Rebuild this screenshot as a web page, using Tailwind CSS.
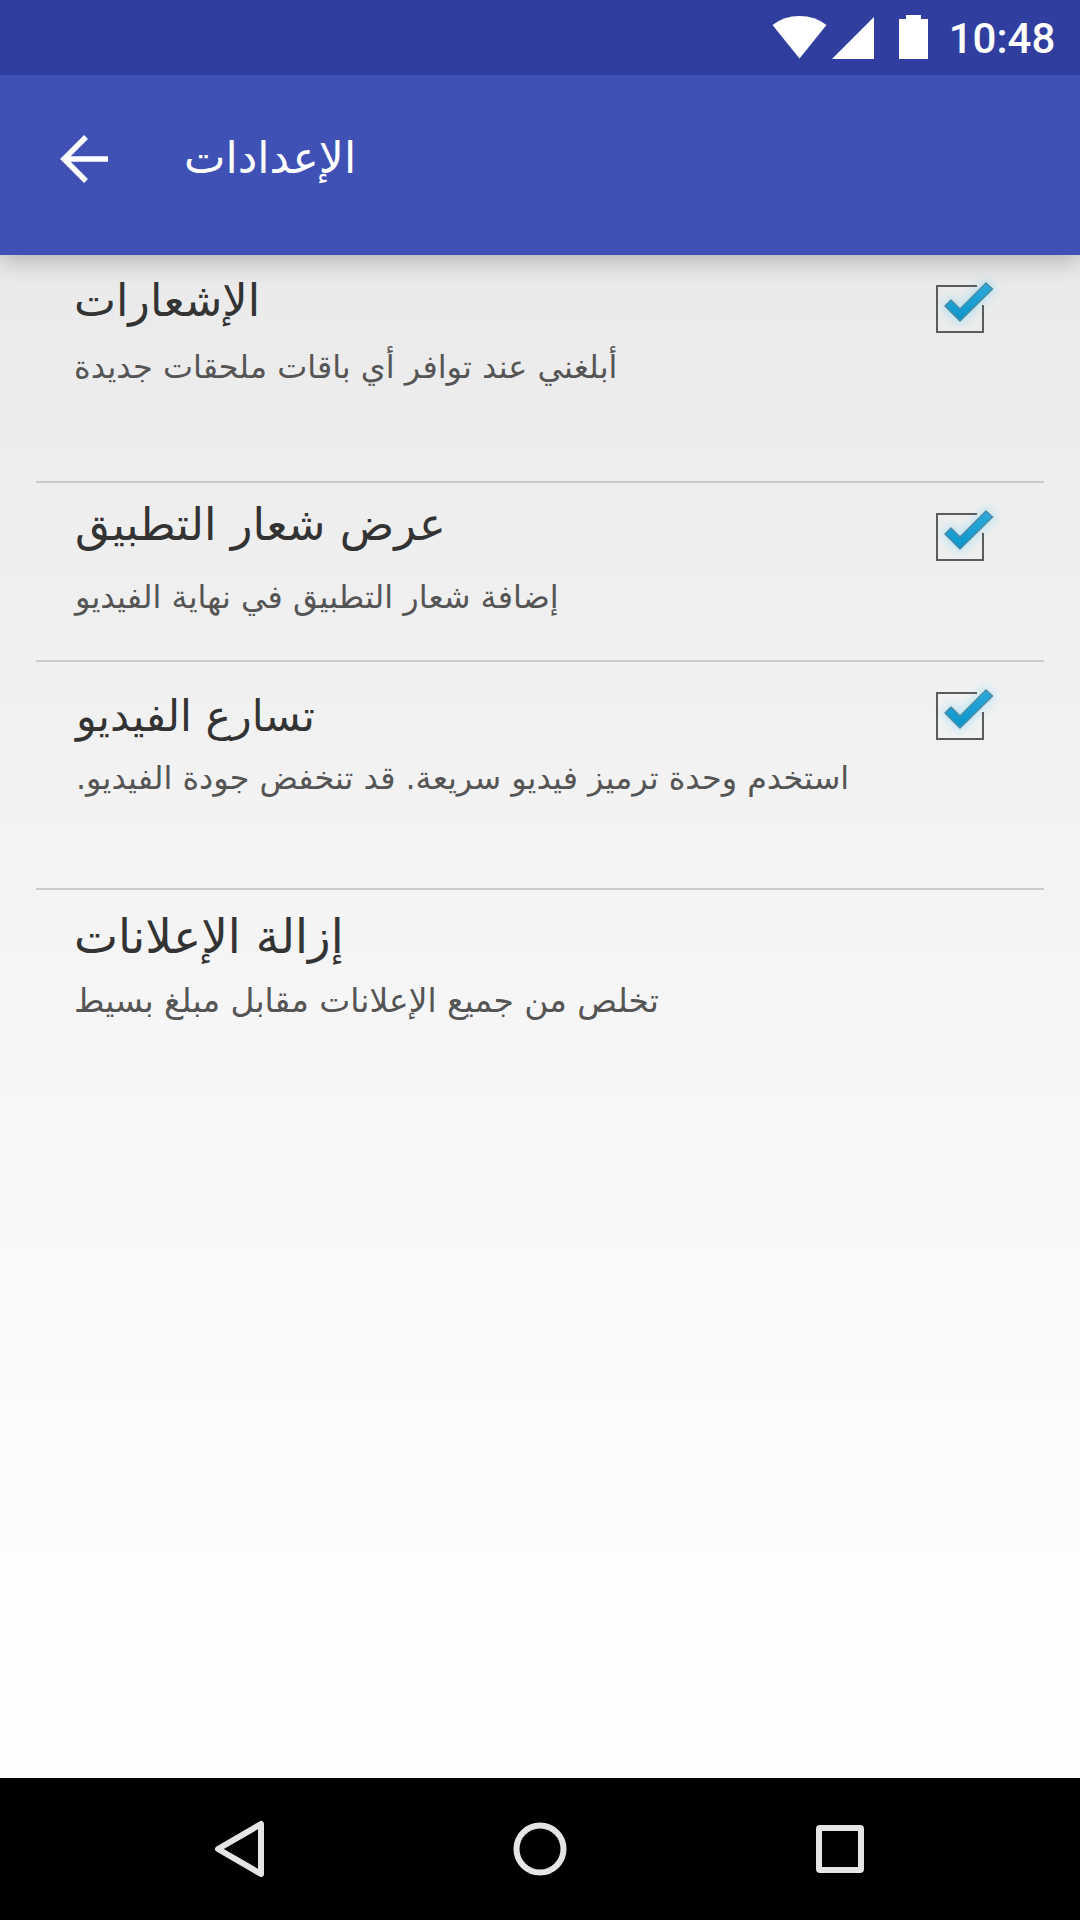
<!DOCTYPE html>
<html lang="ar">
<head>
  <meta charset="UTF-8" />
  <meta name="viewport" content="width=device-width, initial-scale=1.0"/>
  <title>الإعدادات</title>
  <script src="https://cdn.jsdelivr.net/npm/@tailwindcss/browser@4"></script>
</head>
<body class="w-[1080px] h-[1920px] flex flex-col overflow-hidden font-['DejaVu_Sans',sans-serif] whitespace-nowrap">

  <!-- Status bar -->
  <div class="relative z-20 h-[75px] shrink-0 bg-[#303f9f] text-white flex justify-end">
    <svg class="w-[175px] h-[75px]" viewBox="765 0 175 75" fill="currentColor">
      <path d="M799.5 58.5 L772.5 25 Q784 16 799.5 16 Q815 16 826.5 25 Z" />
      <path d="M832 59 L874 17 V59 Z" />
      <path d="M899 59 V19 H906 V15 H921 V19 H928 V59 Z" />
    </svg>
    <span class="w-[130px] mr-[10px] text-center pr-1.5 pt-[15px] font-['Roboto',sans-serif] font-medium text-[42px] leading-[48px]">10:48</span>
  </div>

  <!-- App bar -->
  <header class="relative z-10 h-[180px] shrink-0 bg-[#3f51b5] text-white flex shadow-[0_4px_24px_rgba(0,0,0,0.28)]">
    <svg class="ml-[60px] mt-[60px] w-12 h-12" viewBox="0 0 48 48" fill="none" stroke="currentColor" stroke-width="5.5">
      <path d="M26 2 L4 24 L26 46 M4 24 H48" />
    </svg>
    <h1 dir="rtl" class="ml-[76px] mt-[55px] text-[44px] leading-[56px]">الإعدادات</h1>
  </header>

  <!-- Settings list -->
  <main class="flex-1 px-9 bg-linear-to-b from-[#eaeaea] via-[#f6f6f6] via-50% to-[#fdfdfd] to-85%">
    <section class="h-[228px] border-b-2 border-[#cbcbcb] flex justify-between">
      <div class="pl-[38px] pt-[18px] flex flex-col items-start">
        <h2 dir="rtl" class="text-[44.6px] leading-[56px] text-[#333]">الإشعارات</h2>
        <p dir="rtl" class="mt-4 text-[31.9px] leading-[44px] text-[#555]">أبلغني عند توافر أي باقات ملحقات جديدة</p>
      </div>
      <svg class="mt-[10px] mr-[38px] w-20 h-20 shrink-0" viewBox="926 265 80 80"><use href="#checkbox" /></svg>
    </section>

    <section class="h-[179px] border-b-2 border-[#cbcbcb] flex justify-between">
      <div class="pl-[39px] pt-[14px] flex flex-col items-start">
        <h2 dir="rtl" class="text-[45px] leading-[56px] text-[#333]">عرض شعار التطبيق</h2>
        <p dir="rtl" class="mt-[22px] text-[31.9px] leading-[44px] text-[#555]">إضافة شعار التطبيق في نهاية الفيديو</p>
      </div>
      <svg class="mt-[10px] mr-[38px] w-20 h-20 shrink-0" viewBox="926 265 80 80"><use href="#checkbox" /></svg>
    </section>

    <section class="h-[228px] border-b-2 border-[#cbcbcb] flex justify-between">
      <div class="pl-10 pt-[26px] flex flex-col items-start">
        <h2 dir="rtl" class="text-[42.8px] leading-[56px] text-[#333]">تسارع الفيديو</h2>
        <p dir="rtl" class="mt-3 text-[31.8px] leading-[44px] text-[#555]">استخدم وحدة ترميز فيديو سريعة. قد تنخفض جودة الفيديو.</p>
      </div>
      <svg class="mt-[10px] mr-[38px] w-20 h-20 shrink-0" viewBox="926 265 80 80"><use href="#checkbox" /></svg>
    </section>

    <section class="pl-[38px] pt-[19px] flex flex-col items-start">
      <h2 dir="rtl" class="text-[46.8px] leading-[56px] text-[#333]">إزالة الإعلانات</h2>
      <p dir="rtl" class="mt-[14px] text-[32.9px] leading-[44px] text-[#555]">تخلص من جميع الإعلانات مقابل مبلغ بسيط</p>
    </section>
  </main>

  <!-- Navigation bar -->
  <nav class="h-[142px] shrink-0 bg-black">
    <svg class="w-full h-full" viewBox="0 1778 1080 142" fill="none" stroke="#e5e5e5" stroke-width="6" stroke-linejoin="round">
      <path d="M261 1824 V1874 L218 1849 Z" />
      <circle cx="540" cy="1849" r="23.5" />
      <rect x="819" y="1828" width="42" height="42" rx="1" />
    </svg>
  </nav>

  <!-- Shared icon -->
  <svg class="absolute w-0 h-0">
    <defs>
      <linearGradient id="tick" x1="0" y1="0" x2="0" y2="1">
        <stop offset="0" stop-color="#2eaadb" />
        <stop offset="1" stop-color="#0a95cb" />
      </linearGradient>
      <filter id="glow" x="-40%" y="-40%" width="180%" height="180%">
        <feGaussianBlur stdDeviation="5" />
      </filter>
      <g id="checkbox">
        <path d="M944 306 L951 299 L960 308 L986 282 L993 289 L960 322 Z" fill="#7fd6f5" stroke="#7fd6f5" stroke-width="4" opacity="0.5" filter="url(#glow)" />
        <path d="M977 286 H937 V332 H983 V305" fill="none" stroke="#5c5c5c" stroke-width="2" />
        <path d="M945 306 L951 300 L960 309 L986 283 L992.5 289 L960 321 Z" fill="url(#tick)" stroke="#4d8ba5" stroke-width="1.5" stroke-linejoin="round" />
      </g>
    </defs>
  </svg>

</body>
</html>
